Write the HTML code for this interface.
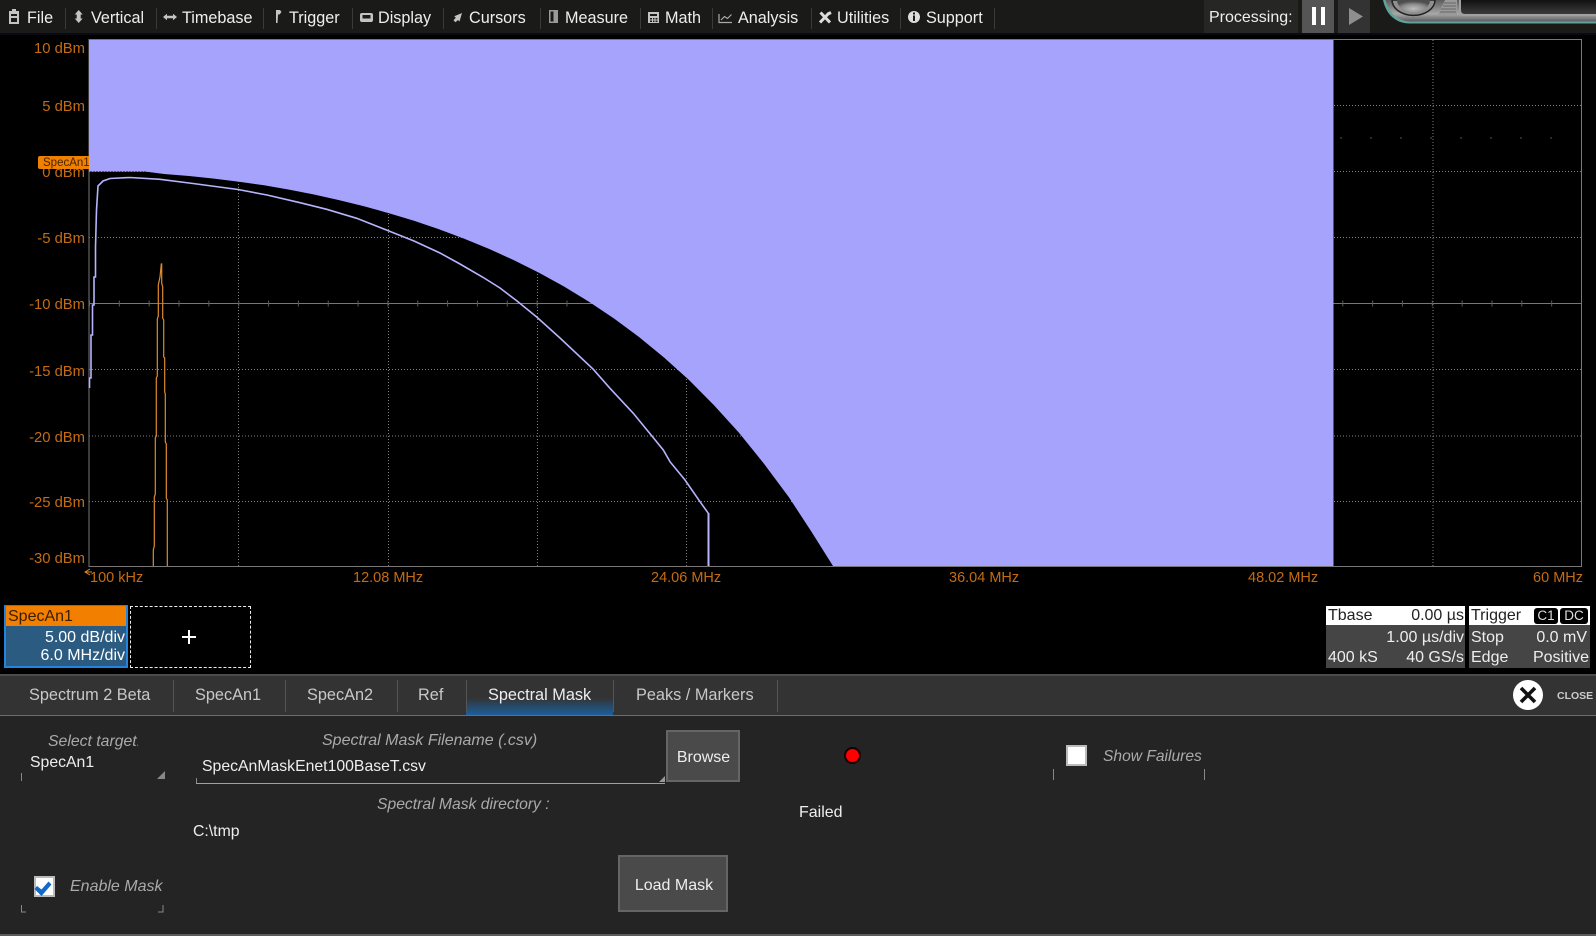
<!DOCTYPE html>
<html><head><meta charset="utf-8"><title>Spectral Mask</title>
<style>
html,body{margin:0;padding:0;background:#000}
#r{position:relative;width:1596px;height:936px;overflow:hidden;background:#000;font-family:"Liberation Sans",sans-serif;color:#fff;font-size:16px}
.t{position:absolute;line-height:20px;height:20px;white-space:nowrap}
.b{position:absolute}
.m{font-size:16.2px;color:#eee;top:8px}
.s{position:absolute;top:8px;height:21px;width:1px;background:#3a3a38}
.y{color:#c56c12;font-size:14.8px;right:1511px}
.x{color:#c56c12;font-size:14.5px;top:568px}
.tab{color:#c8c8c8;font-size:16.3px;top:685px}
.sep{position:absolute;top:680px;height:32px;width:1px;background:#555}
.i{color:#aaa;font-style:italic;font-size:16px}
.btn{position:absolute;background:#4a4a4a;border:2px solid #656565;box-sizing:border-box;color:#eee;text-align:center}
svg{position:absolute;left:0;top:0}
</style></head><body><div id="r">

<div class="b" style="left:0;top:0;width:1596px;height:33px;background:#1a1a18"></div>
<div class="b" style="left:0;top:33px;width:1596px;height:2px;background:#0a0a14"></div>
<div class="s" style="left:65px"></div><div class="s" style="left:156px"></div><div class="s" style="left:263px"></div><div class="s" style="left:352px"></div><div class="s" style="left:443px"></div><div class="s" style="left:540px"></div><div class="s" style="left:640px"></div><div class="s" style="left:712px"></div><div class="s" style="left:811px"></div><div class="s" style="left:900px"></div><div class="s" style="left:994px"></div>
<span class="t m" style="left:27px">File</span>
<span class="t m" style="left:91px">Vertical</span>
<span class="t m" style="left:182px">Timebase</span>
<span class="t m" style="left:289px">Trigger</span>
<span class="t m" style="left:378px">Display</span>
<span class="t m" style="left:469px">Cursors</span>
<span class="t m" style="left:565px">Measure</span>
<span class="t m" style="left:665px">Math</span>
<span class="t m" style="left:738px">Analysis</span>
<span class="t m" style="left:837px">Utilities</span>
<span class="t m" style="left:926px">Support</span>

<div class="b" style="left:1204px;top:0;width:94px;height:33px;background:#262624"></div>
<span class="t" style="left:1209px;top:8px;font-size:16px;color:#eee">Processing:</span>
<div class="b" style="left:1302px;top:0;width:32px;height:33px;background:#555"></div>
<div class="b" style="left:1312px;top:7px;width:4px;height:18px;background:#fff"></div>
<div class="b" style="left:1321px;top:7px;width:4px;height:18px;background:#fff"></div>
<div class="b" style="left:1338px;top:0;width:32px;height:33px;background:#333"></div>

<svg width="1596" height="936" viewBox="0 0 1596 936">
<defs>
<radialGradient id="kn" cx="50%" cy="70%" r="60%"><stop offset="0" stop-color="#bdbdbd"/><stop offset="0.6" stop-color="#8c8c8c"/><stop offset="1" stop-color="#4e4e4e"/></radialGradient>
<linearGradient id="sc" x1="0" y1="0" x2="0" y2="1"><stop offset="0" stop-color="#111"/><stop offset="1" stop-color="#3c3c3c"/></linearGradient>
<linearGradient id="bz" x1="0" y1="0" x2="0" y2="1"><stop offset="0" stop-color="#5c5c5e"/><stop offset="0.65" stop-color="#a8a8a8"/><stop offset="1" stop-color="#5c5c60"/></linearGradient>
</defs>
<!-- menu icons -->
<g fill="#c4c4c4" stroke="none">
<path d="M9 11h3V9h4v2h3v13H9z M11 14v2h6v-2z M11 18v4h6v-4z" fill-rule="evenodd"/>
<path d="M78.700 10l4 4.500h-2v4h2l-4 4.500l-4-4.500h2v-4h-2z"/>
<path d="M163 17l4-3.200v2h6v-2l4 3.200l-4 3.200v-2h-6v2z"/>
<path d="M276 10h4l1.500 2l-2 2.500h-1.500L277.500 23H276z"/>
<path d="M362 13h9q2 0 2 2v5q0 2-2 2h-9q-2 0-2-2v-5q0-2 2-2z M362.500 15v3.500h8V15z" fill-rule="evenodd"/>
<path d="M462 13l-2.500 8.500l-1.500-1.500l-2.500 2.200l-2-2l2.300-2.400l-1.500-1.500z"/>
<path d="M549 10h9v13h-9z M550.500 11.500v10h3v-10z" fill-rule="evenodd" fill="#9a9a9a"/>
<path d="M648 12h11v11h-11z M650 14v2h7v-2z M650 18v1.500h2V18z M653 18v1.500h1.500V18z M655.500 18v1.500h2V18z M650 20.500v1.500h2v-1.500z M653 20.500v1.500h1.500v-1.500z M655.500 20.500v1.500h2v-1.500z" fill-rule="evenodd"/>
</g>
<path d="M719 14v8.500h13 M721 20l3.500-3.500l3 2l4-4" fill="none" stroke="#aaa" stroke-width="1.200"/>
<path d="M820.500 12.500l9.500 10 M831 12.500l-3 1.500 M820 22.500l9-9.500" stroke="#ddd" stroke-width="3" fill="none"/>
<circle cx="914" cy="17" r="6" fill="#ddd"/><path d="M913 15.500h2v5.500h-2z M913 12.500h2v2h-2z" fill="#1a1a18"/>
<path d="M1349 8l14 8.500l-14 8.500z" fill="#8e8e8e"/>

<!-- top-right instrument bezel -->
<path d="M1383 0c3 14 12 23 26 23.500H1596V0z" fill="#5fa39b"/>
<path d="M1385.500 0c3 12 12 21 24 21.500H1596V0z" fill="url(#bz)"/>
<path d="M1392 0a21 15 0 0 0 43 0z" fill="#8f8f8f" stroke="#222" stroke-width="1.500"/>
<path d="M1397 0a16 12 0 0 0 33 0z" fill="url(#kn)"/>
<path d="M1438 15l7-15h12v15z" fill="#9a9a9a"/>
<path d="M1444 3h12M1443 6h13M1441 9h15M1440 12h16" stroke="#666" stroke-width="1"/>
<path d="M1459 0v12q0 4 4 4h133V0z" fill="#a0a0a0"/>
<path d="M1461 0v10q0 4 4 4h131V0z" fill="url(#sc)"/>

<!-- grid -->
<g stroke="#808080" stroke-width="1" stroke-dasharray="1 2" fill="none">
<path d="M89 105.500H1581M89 171.500H1581M89 237.500H1581M89 369.500H1581M89 436H1581M89 501.500H1581"/>
<path d="M238.500 40V566M388.500 40V566M537.500 40V566M686.500 40V566M836 40V566M985 40V566M1135 40V566M1284 40V566M1433 40V566"/>
</g>
<path d="M89 303.500H1581" stroke="#777" stroke-width="1"/>
<path d="M89 303.500H1581" stroke="#5a5a5a" stroke-width="6" stroke-dasharray="1 28.840"/>
<path d="M1340 138H1560" stroke="#2a2a2a" stroke-width="2" stroke-dasharray="2 28"/>
<path d="M89 39.500H1581.500V566.500H89z" fill="none" stroke="#777" stroke-width="1"/>

<!-- mask -->
<path fill="#a5a3fc" d="M89 40H1333.500V566H833L811 531L789 497.400L764 463.700L739 432.800L714 405.200L689 380L664 357.500L639 337L614 318.500L589 301.700L564 286.500L539 272.800L514 260.200L489 248.900L464 238.600L439 229.300L414 220.800L389 213.200L364 206.200L339 200.100L314 194.500L289 189.600L264 185.300L239 181.700L214 178.600L189 176L164 174L145 171.500H89z"/>

<!-- traces -->
<path fill="none" stroke="#b6b4ff" stroke-width="1.600" d="M89.500 388V378H91V335H92.500V305H94V277H95.500V247L96.500 210L98 186L103 181L110 178.500L130 177.500L160 179.300L193 183.500L238 189.500L267 195L300 202.700L326.700 209.300L356.700 218.300L388.300 230.700L414 241L440 253L460 264L483.300 277.500L500 288L516.700 300.800L536.700 317L560 338L593.300 369.300L610 388.300L633.300 413.300L651.700 435.700L663.300 450L670 461.700L685 480L700 501.700L708.300 513.300"/>
<path fill="none" stroke="#b6b4ff" stroke-width="2" d="M708.500 513V566"/>
<path fill="none" stroke="#e08a2c" stroke-width="1.200" d="M153.300 566V550L154.300 546V497L155.300 494V438L156.300 436V378L157.300 376V319L158.300 316V285L160 277L161.300 264L161.700 264V283L162.700 287V318L163.700 320V357L164.700 358V392L165.300 394V442L166.300 444V498L167.300 500V566"/>
<path d="M90 575l-5-3 5-3 M85 572h7" fill="none" stroke="#e08a2c" stroke-width="1"/>
</svg>

<!-- axis labels -->
<span class="t y" style="top:39px">10 dBm</span>
<span class="t y" style="top:97px">5 dBm</span>
<span class="t y" style="top:163px">0 dBm</span>
<span class="t y" style="top:229px">-5 dBm</span>
<span class="t y" style="top:295px">-10 dBm</span>
<span class="t y" style="top:362px">-15 dBm</span>
<span class="t y" style="top:428px">-20 dBm</span>
<span class="t y" style="top:493px">-25 dBm</span>
<span class="t y" style="top:549px">-30 dBm</span>
<div class="b" style="left:38px;top:156px;width:51px;height:13px;background:#f08000;border-radius:2px 0 0 2px"></div>
<span class="t" style="left:43px;top:153px;font-size:11.500px;color:#4a2400;width:46px;overflow:hidden">SpecAn1</span>

<span class="t x" style="left:90px">100 kHz</span>
<span class="t x" style="left:353px">12.08 MHz</span>
<span class="t x" style="left:651px">24.06 MHz</span>
<span class="t x" style="left:949px">36.04 MHz</span>
<span class="t x" style="left:1248px">48.02 MHz</span>
<span class="t x" style="right:13px">60 MHz</span>

<!-- trace descriptor -->
<div class="b" style="left:4px;top:605px;width:124px;height:63px;box-sizing:border-box;border:2px solid #2583dd;background:#2c5b82"></div>
<div class="b" style="left:6px;top:606px;width:120px;height:20px;background:#f27f00"></div>
<span class="t" style="left:8px;top:607px;font-size:16px;color:#3a2000">SpecAn1</span>
<span class="t" style="right:1471px;top:628px;font-size:16px">5.00 dB/div</span>
<span class="t" style="right:1471px;top:646px;font-size:16px">6.0 MHz/div</span>
<div class="b" style="left:130px;top:606px;width:121px;height:62px;box-sizing:border-box;border:1px dashed #eee"></div>
<div class="b" style="left:182px;top:636px;width:14px;height:2px;background:#fff"></div>
<div class="b" style="left:188px;top:630px;width:2px;height:14px;background:#fff"></div>

<!-- Tbase/Trigger -->
<div class="b" style="left:1326px;top:606px;width:139px;height:62px;background:#454545"></div>
<div class="b" style="left:1326px;top:606px;width:139px;height:19px;background:#fff"></div>
<span class="t" style="left:1328px;top:606px;color:#222;font-size:16px">Tbase</span>
<span class="t" style="right:132px;top:606px;color:#222;font-size:16px">0.00 µs</span>
<span class="t" style="right:132px;top:628px;color:#eee;font-size:16px">1.00 µs/div</span>
<span class="t" style="left:1328px;top:648px;color:#eee;font-size:16px">400 kS</span>
<span class="t" style="right:132px;top:648px;color:#eee;font-size:16px">40 GS/s</span>
<div class="b" style="left:1469px;top:606px;width:121px;height:62px;background:#454545"></div>
<div class="b" style="left:1469px;top:606px;width:121px;height:19px;background:#fff"></div>
<span class="t" style="left:1471px;top:606px;color:#222;font-size:16px">Trigger</span>
<div class="b" style="left:1534px;top:608px;width:24px;height:16px;background:#000;border-radius:3px;color:#ddd;font-size:13.500px;line-height:16px;text-align:center">C1</div>
<div class="b" style="left:1560px;top:608px;width:28px;height:16px;background:#000;border-radius:3px;color:#ddd;font-size:13.500px;line-height:16px;text-align:center">DC</div>
<span class="t" style="left:1471px;top:628px;color:#eee;font-size:16px">Stop</span>
<span class="t" style="right:9px;top:628px;color:#eee;font-size:16px">0.0 mV</span>
<span class="t" style="left:1471px;top:648px;color:#eee;font-size:16px">Edge</span>
<span class="t" style="right:7px;top:648px;color:#eee;font-size:16px">Positive</span>

<!-- panel -->
<div class="b" style="left:0;top:674px;width:1596px;height:262px;background:#242424"></div>
<div class="b" style="left:0;top:674px;width:1596px;height:41px;background:#333;border-top:2px solid #4c4c4c;box-sizing:border-box"></div>
<div class="b" style="left:466px;top:676px;width:147px;height:39px;background:linear-gradient(#333 0%,#333 55%,#1d5f9c 100%)"></div>
<div class="b" style="left:0;top:715px;width:1596px;height:1px;background:#2080d0"></div>
<div class="sep" style="left:173px"></div><div class="sep" style="left:285px"></div><div class="sep" style="left:397px"></div><div class="sep" style="left:466px"></div><div class="sep" style="left:613px"></div><div class="sep" style="left:777px"></div>
<span class="t tab" style="left:29px">Spectrum 2 Beta</span>
<span class="t tab" style="left:195px">SpecAn1</span>
<span class="t tab" style="left:307px">SpecAn2</span>
<span class="t tab" style="left:418px">Ref</span>
<span class="t tab" style="left:488px;color:#eee">Spectral Mask</span>
<span class="t tab" style="left:636px">Peaks / Markers</span>
<div class="b" style="left:1513px;top:680px;width:30px;height:30px;border-radius:50%;background:#fff"></div>
<svg width="1596" height="936" viewBox="0 0 1596 936">
<path d="M1521 688l14 14M1535 688l-14 14" stroke="#111" stroke-width="3.600" fill="none"/>
<g stroke="#888" fill="none" stroke-width="1">
<path d="M21.500 773V781"/><path d="M21.500 905V912H26"/><path d="M163 905V912H158"/>
<path d="M196.500 778V783"/><path d="M1053.500 769V780"/><path d="M1204.500 769V780"/>
</g>
<path d="M165 771V779H157z" fill="#888"/>
<path d="M196 783.500H665" stroke="#a0a0a0" stroke-width="1"/>
<path d="M665 776V782H659z" fill="#999"/>
</svg>
<span class="t" style="left:1557px;top:686px;font-size:10.500px;font-weight:bold;color:#ccc">CLOSE</span>

<span class="t i" style="left:48px;top:732px;width:90px;overflow:hidden;font-size:15.800px">Select target!</span>
<span class="t" style="left:30px;top:753px;color:#eee;font-size:15.800px">SpecAn1</span>
<span class="t i" style="left:322px;top:731px">Spectral Mask Filename (.csv)</span>
<span class="t" style="left:202px;top:757px;color:#eee;font-size:15.800px">SpecAnMaskEnet100BaseT.csv</span>
<span class="t i" style="left:377px;top:795px;font-size:15.700px">Spectral Mask directory :</span>
<span class="t" style="left:193px;top:822px;color:#eee;font-size:15.800px">C:\tmp</span>
<div class="btn" style="left:666px;top:730px;width:74px;height:52px;line-height:52px;font-size:16px;text-indent:1px">Browse</div>
<div class="btn" style="left:618px;top:855px;width:110px;height:57px;line-height:57px;font-size:16px;text-indent:2px">Load Mask</div>
<div class="b" style="left:844px;top:747px;width:17px;height:17px;border-radius:50%;background:#160000"></div>
<div class="b" style="left:846px;top:749px;width:13px;height:13px;border-radius:50%;background:#ff0000"></div>
<span class="t" style="left:799px;top:803px;color:#eee;font-size:16px">Failed</span>
<div class="b" style="left:1066px;top:745px;width:21px;height:21px;background:#fff;border:2px solid #bbb;box-sizing:border-box"></div>
<span class="t i" style="left:1103px;top:747px;font-size:15.600px">Show Failures</span>
<div class="b" style="left:34px;top:876px;width:21px;height:21px;background:#fff;border:2px solid #bbb;box-sizing:border-box"></div>
<svg width="1596" height="936" viewBox="0 0 1596 936"><path d="M37 886l4.500 3.500l7-8l3 3l-10 11.500l-7-7z" fill="#1468c8"/></svg>
<span class="t i" style="left:70px;top:877px">Enable Mask</span>
<div class="b" style="left:0;top:934px;width:1596px;height:2px;background:#5a5a5a"></div>
</div></body></html>
